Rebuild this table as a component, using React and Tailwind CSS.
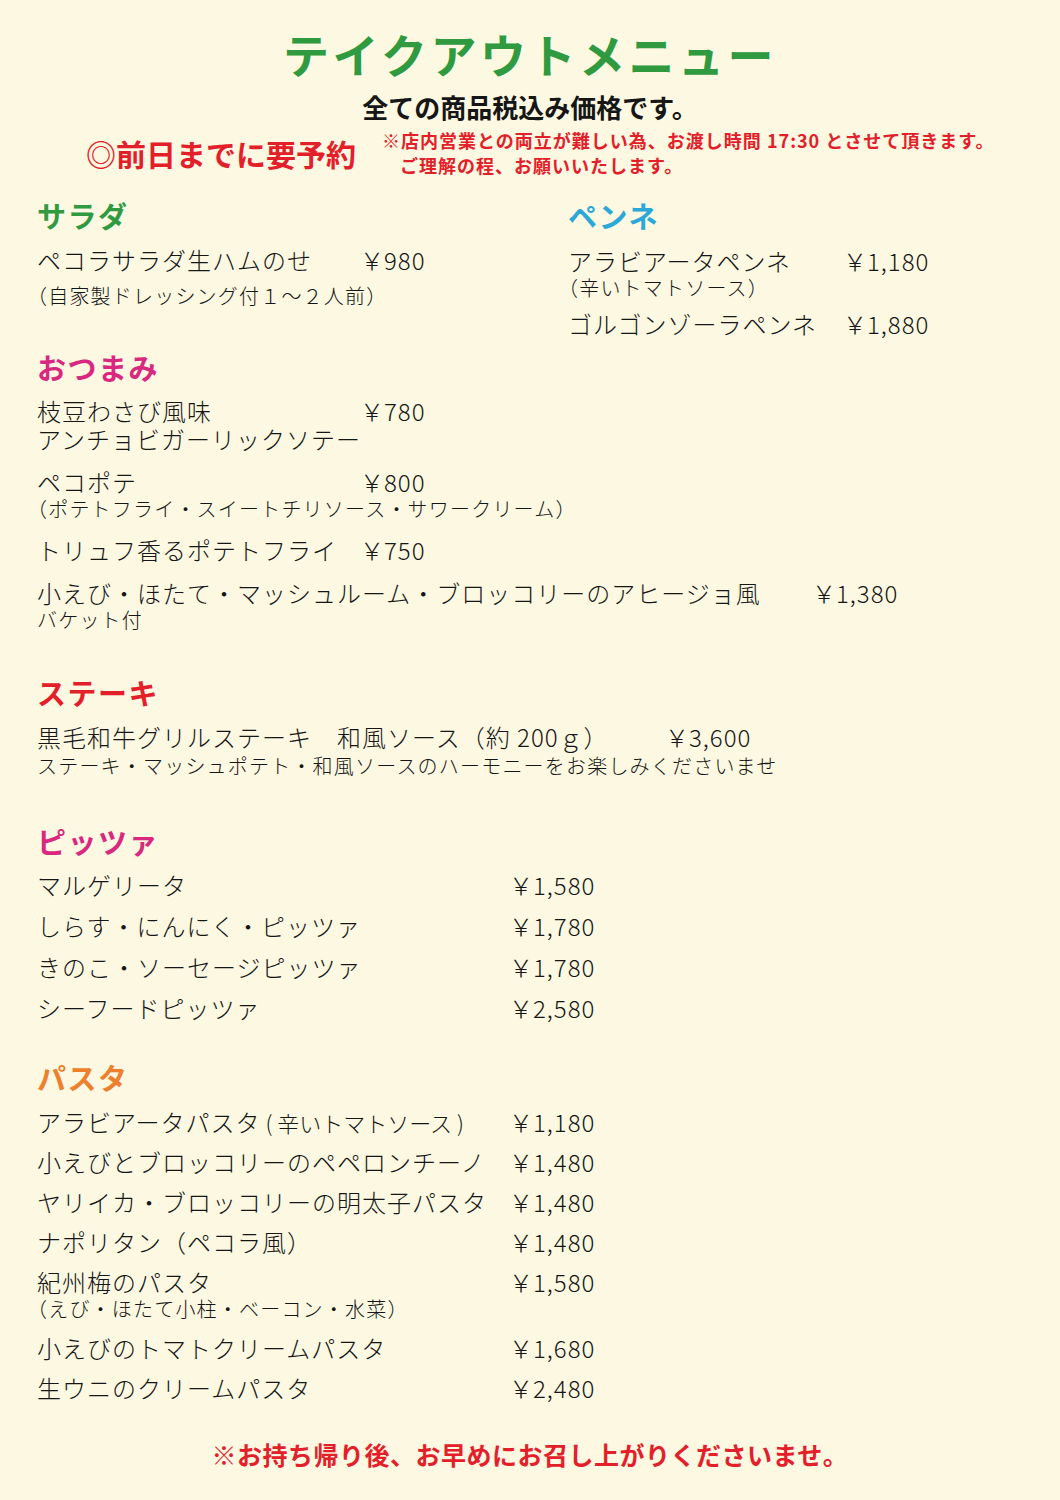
const jp = { fontFamily: '"Noto Sans CJK JP", "Noto Sans", sans-serif' };

const salad = [{ name: "ペコラサラダ生ハムのせ", price: "980" }];

const pizza = [
  { name: "マルゲリータ", price: "1,580" },
  { name: "しらす・にんにく・ピッツァ", price: "1,780" },
  { name: "きのこ・ソーセージピッツァ", price: "1,780" },
  { name: "シーフードピッツァ", price: "2,580" },
];

const pasta = [
  {
    name: (
      <>
        アラビアータパスタ<span className="text-[22px] tracking-[0px]"> ( 辛いトマトソース )</span>
      </>
    ),
    price: "1,180",
  },
  { name: "小えびとブロッコリーのペペロンチーノ", price: "1,480" },
  { name: "ヤリイカ・ブロッコリーの明太子パスタ", price: "1,480" },
  { name: "ナポリタン（ペコラ風）", price: "1,480" },
  { name: "紀州梅のパスタ", price: "1,580", sub: "（えび・ほたて小柱・ベーコン・水菜）" },
  { name: "小えびのトマトクリームパスタ", price: "1,680" },
  { name: "生ウニのクリームパスタ", price: "2,480" },
];

function Heading({ children, className }) {
  return (
    <h2 className={"text-[29px] leading-[34px] font-bold tracking-[1.5px] " + className}>
      {children}
    </h2>
  );
}

function Price({ children }) {
  return (
    <span className="-ml-[3px] flex items-baseline text-[24px] leading-[28px] font-light">
      <span>￥</span>
      <span className="tracking-[1px]">{children}</span>
    </span>
  );
}

// one menu line: fixed name column so the prices line up
function Item({ name, price, nameW, className = "" }) {
  return (
    <div className={"flex items-baseline h-[28px] " + className}>
      <span className={"shrink-0 whitespace-nowrap text-[24px] leading-[28px] tracking-[1px] font-light " + nameW}>
        {name}
      </span>
      {price && <Price>{price}</Price>}
    </div>
  );
}

function Sub({ children, className = "" }) {
  return (
    <p className={"-ml-[10px] text-[20px] leading-[26px] tracking-[1.2px] font-light whitespace-nowrap " + className}>
      {children}
    </p>
  );
}

export default function App() {
  return (
    <div className="w-[1060px] h-[1500px] bg-[#fcf8e1] text-[#161616] pt-[28px]" style={jp}>
      {/* header */}
      <h1 className="text-center text-[46px] leading-[50px] font-bold tracking-[3.5px] text-[#2f9a3f]">
        テイクアウトメニュー
      </h1>
      <p className="mt-[14px] text-center text-[26px] leading-[30px] font-bold">
        全ての商品税込み価格です。
      </p>
      <div className="mt-[6px] flex items-center h-[50px] text-[#e3202a] font-bold">
        <span className="ml-[86px] w-[296px] text-[30px] leading-[40px]">◎前日までに要予約</span>
        <div className="text-[18px] leading-[25px] tracking-[1px]">
          <p>※店内営業との両立が難しい為、お渡し時間 17:30 とさせて頂きます。</p>
          <p className="pl-[18px]">ご理解の程、お願いいたします。</p>
        </div>
      </div>

      <div className="px-[37px]">
        {/* salad / penne */}
        <div className="mt-[20px] grid grid-cols-[531px_1fr] h-[145px]">
          <div>
            <Heading className="text-[#2f9a3f]">サラダ</Heading>
            {salad.map((it) => (
              <Item key={it.name} {...it} nameW="w-[326px]" className="mt-[14px]" />
            ))}
            <Sub className="mt-[9px]">（自家製ドレッシング付１～２人前）</Sub>
          </div>
          <div>
            <Heading className="text-[#2aa8d8]">ペンネ</Heading>
            <Item name="アラビアータペンネ" price="1,180" nameW="w-[278px]" className="mt-[15px]" />
            <Sub>（辛いトマトソース）</Sub>
            <Item name="ゴルゴンゾーラペンネ" price="1,880" nameW="w-[278px]" className="mt-[9px]" />
          </div>
        </div>

        {/* otsumami */}
        <Heading className="mt-[7px] text-[#d9287f]">おつまみ</Heading>
        <Item name="枝豆わさび風味" price="780" nameW="w-[326px]" className="mt-[13px]" />
        <Item name="アンチョビガーリックソテー" nameW="w-[400px]" />
        <Item name="ペコポテ" price="800" nameW="w-[326px]" className="mt-[15px]" />
        <Sub>（ポテトフライ・スイートチリソース・サワークリーム）</Sub>
        <Item name="トリュフ香るポテトフライ" price="750" nameW="w-[326px]" className="mt-[14px]" />
        <Item
          name="小えび・ほたて・マッシュルーム・ブロッコリーのアヒージョ風"
          price="1,380"
          nameW="w-[778px]"
          className="mt-[15px]"
        />
        <Sub className="ml-0">バケット付</Sub>

        {/* steak */}
        <Heading className="mt-[42px] text-[#e3202a]">ステーキ</Heading>
        <Item
          name="黒毛和牛グリルステーキ　和風ソース（約 200ｇ）"
          price="3,600"
          nameW="w-[631px]"
          className="mt-[14px]"
        />
        <Sub className="mt-[2px] ml-0">ステーキ・マッシュポテト・和風ソースのハーモニーをお楽しみくださいませ</Sub>

        {/* pizza */}
        <Heading className="mt-[45px] text-[#d9287f]">ピッツァ</Heading>
        {pizza.map((it) => (
          <Item key={it.name} {...it} nameW="w-[475px]" className="mt-[13px]" />
        ))}

        {/* pasta */}
        <Heading className="mt-[38px] text-[#ee7f2c]">パスタ</Heading>
        {pasta.map((it, i) => (
          <div key={i} className={i === 0 ? "mt-[14px]" : "mt-[12px]"}>
            <Item {...it} nameW="w-[475px]" />
            {it.sub && <Sub>{it.sub}</Sub>}
          </div>
        ))}
      </div>

      <p className="mt-[36px] text-center text-[25px] leading-[32px] font-bold tracking-[0.5px] text-[#e3202a]">
        ※お持ち帰り後、お早めにお召し上がりくださいませ。
      </p>
    </div>
  );
}
